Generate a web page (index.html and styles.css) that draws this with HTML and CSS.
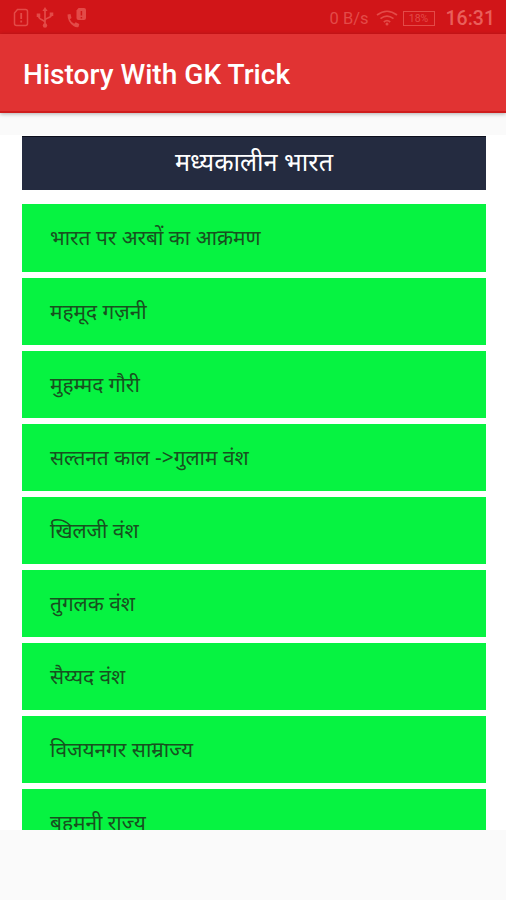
FILE: index.html
```html
<!DOCTYPE html>
<html lang="hi">
<head>
<meta charset="utf-8">
<title>History With GK Trick</title>
<link rel="stylesheet" href="styles.css">
</head>
<body>
<div class="status">
  <svg class="icon-sim" width="16" height="20" viewBox="0 0 16 20"><path d="M4.5 1.5h8a2 2 0 0 1 2 2v12a2 2 0 0 1-2 2h-9a2 2 0 0 1-2-2V5z" fill="none" stroke="currentColor" stroke-width="1.5"/><path d="M8.2 5v6M8.2 12.5v2" stroke="currentColor" stroke-width="1.8"/></svg>
  <svg class="icon-usb" width="18" height="22" viewBox="0 0 18 22"><path d="M9 3v15M9 15.5c0-3-6.500-2-6.500-7M9 13.500c0-3 6.500-2 6.500-6" fill="none" stroke="currentColor" stroke-width="1.7"/><path d="M9 0l2.600 4H6.400zM.7 6.500h3.600v3.400H.7zM13.700 5.500h3.600v3.400h-3.600z" fill="currentColor"/><circle cx="9" cy="18.500" r="2.200" fill="currentColor"/></svg>
  <svg class="icon-call" width="22" height="22" viewBox="0 0 22 22"><path d="M12.500 1h5.500q2 0 2 2v8q0 2-2 2h-5.500q-2 0-2-2V3.500z" fill="currentColor"/><path d="M15.400 4v4.500M15.400 10v1.500" stroke="#d11919" stroke-width="1.500"/><path d="M1.500 7.500l3-.5 1 4-1.700 1.300q1.400 3 4.400 4.500l1.500-1.600 3.600 1.800-.8 3q-2 1-5-1Q1.500 15 1.500 7.500z" fill="currentColor"/></svg>
  <span class="speed">0 B/s</span>
  <svg class="icon-wifi" width="22" height="16" viewBox="0 0 22 16"><path d="M1 5q10-7.500 20 0M4.500 8.700q6.500-5 13 0M7.800 12q3.200-2.600 6.400 0" fill="none" stroke="currentColor" stroke-width="1.700"/><circle cx="11" cy="14" r="1.500" fill="currentColor"/></svg>
  <span class="battery">18%</span>
  <span class="clock">16:31</span>
</div>
<header class="appbar"><h1>History With GK Trick</h1></header>
<main class="content">
  <h2 class="heading">मध्यकालीन भारत</h2>
  <ul class="topics">
    <li>भारत पर अरबों का आक्रमण</li>
    <li>महमूद गज़नी</li>
    <li>मुहम्मद गौरी</li>
    <li>सल्तनत काल -&gt;गुलाम वंश</li>
    <li>खिलजी वंश</li>
    <li>तुगलक वंश</li>
    <li>सैय्यद वंश</li>
    <li>विजयनगर साम्राज्य</li>
    <li>बहमनी राज्य</li>
  </ul>
</main>
</body>
</html>
```
FILE: styles.css
```css
* { box-sizing: border-box; }
body {
  margin: 0;
  height: 900px;
  overflow: hidden;
  display: flex;
  flex-direction: column;
  background: #fafafa;
  font-family: Roboto, "Noto Sans", sans-serif;
}
.status {
  flex: none;
  height: 34px;
  padding: 2px 11px 0 13px;
  display: flex;
  align-items: center;
  background: #d11518;
  color: #e34b48;
}
.status svg { flex: none; }
.icon-usb { margin-left: 7px; }
.icon-call { margin-left: 12px; }
.speed {
  margin-left: auto;
  font-size: 16.500px;
}
.icon-wifi { margin-left: 7px; }
.battery {
  width: 32px;
  height: 15px;
  margin-left: 5px;
  border: 1px solid currentColor;
  font-size: 10.500px;
  line-height: 13px;
  text-align: center;
}
.clock {
  margin-left: 11px;
  font-size: 19.500px;
  font-weight: 500;
  color: #e95f5b;
}
.appbar {
  flex: none;
  height: 79px;
  padding: 0 23px;
  display: flex;
  align-items: center;
  background: #e13333;
  border-bottom: 2px solid #cf1c1c;
  box-shadow: 0 1px 4px rgba(0, 0, 0, .3);
}
.appbar h1 {
  margin: 4px 0 0;
  color: #fff;
  font-size: 28.100px;
  font-weight: 500;
  line-height: 32px;
}
.content {
  flex: none;
  height: 695px;
  margin-top: 22px;
  padding: 1px 20px 0 22px;
  overflow: hidden;
  background: #fff;
}
.heading {
  height: 54px;
  margin: 0 0 14.400px;
  background: #242b40;
  border-top: 1px solid #0b0e1c;
  color: #fff;
  font-family: "Noto Sans", sans-serif;
  font-size: 25.200px;
  font-weight: 400;
  line-height: 48px;
  text-align: center;
}
.topics {
  margin: 0;
  padding: 0;
  display: flex;
  flex-direction: column;
  gap: 6px;
  list-style: none;
}
.topics li {
  flex: none;
  height: 67.120px;
  padding-left: 28px;
  background: #06f341;
  color: #18501f;
  font-family: "Noto Sans", sans-serif;
  font-size: 20.850px;
  line-height: 66px;
}
```
